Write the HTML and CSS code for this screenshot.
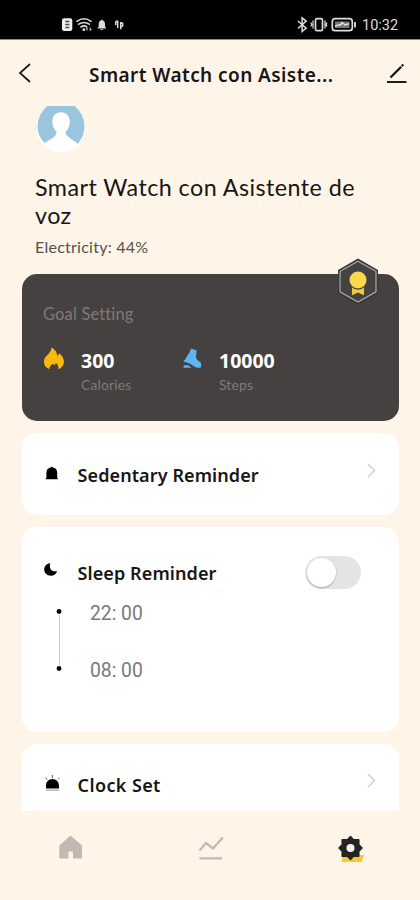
FILE: index.html
```
<!DOCTYPE html>
<html lang="en">
<head>
<meta charset="utf-8">
<title>Smart Watch</title>
<link rel="stylesheet" href="styles.css">
</head>
<body>
<div class="status">
  <svg class="status-left" width="66" height="18" viewBox="60 16 66 18">
    <rect x="62" y="18.2" width="10.3" height="12.8" rx="2.2" fill="#eee"/>
    <path d="M65.3 21.5h4M65.3 24.5h4M65.3 27.5h4" stroke="#444" stroke-width="1.3"/>
    <g fill="none" stroke="#ddd" stroke-width="1.6" stroke-linecap="round"><path d="M77 21.3q7-5 14 0M78.7 24.2q5.300-3.500 10.600 0M81 27q3-2 5.500-.3"/></g>
    <circle cx="83.800" cy="29.700" r="1.400" fill="#ddd"/>
    <path d="M87 27.500v3m0-3l-1.300 1.300M90.200 30.500v-3m0 3l1.300-1.300" stroke="#ddd" fill="none"/>
    <path d="M97.300 28.500l1.400-2v-2.500q.2-3.400 2.600-3.800.6-1.400 1.200 0 2.300.5 2.500 3.800v2.500l1.300 2z" fill="#ddd"/><path d="M100 29.200h3.600q-1.800 1.900-3.600 0" fill="#ddd"/>
    <path d="M117.700 28v-7.200M115.700 25.200v-3l2-1.600M120.700 22v7.300M120.700 22.600l2 .6v2.600l-2 1.200" fill="none" stroke="#ddd" stroke-width="1.500"/>
  </svg>
  <div class="status-right">
    <svg width="61" height="18" viewBox="297 16 61 18" fill="none" stroke="#ddd">
      <path d="M299 21l8.200 7.300-4.100 3.200V17.800l4.100 3.300-8.200 7.400" stroke-width="1.500"/>
      <rect x="316.500" y="18.700" width="7" height="12" rx="1.500" stroke-width="1.700"/><path d="M314 20.500v8M311.800 22.500l1 2-1 2M326 20.500v8M328 22.500l-1 2 1 2" stroke-width="1.200"/>
      <rect x="333.300" y="18.700" width="20" height="12" rx="3" stroke-width="1.700"/><rect x="336" y="21.500" width="14.500" height="6.500" fill="#777" stroke="none"/><path d="M336 26l6-1.500 1-2 3 2.500 4-1.200" stroke-width="1.500"/><path d="M356 22v5.500" stroke-width="1.800"/>
    </svg>
    <span class="time">10:32</span>
  </div>
</div>
<header class="header">
  <svg width="14" height="22" viewBox="18 62 14 22" fill="none" stroke="#191714" stroke-width="1.700"><path d="M30 64L20 73l10 9"/></svg>
  <h1 class="title">Smart Watch con Asiste...</h1>
  <svg width="22" height="22" viewBox="386 62 22 22" stroke="#111"><path d="M390.500 77.500l10.700-10.800M401.800 66l1.500-1.500" stroke-width="2.300"/><path d="M387 82h19.500" stroke-width="1.900"/></svg>
</header>
<main class="content">
  <svg class="avatar" width="50" height="48" viewBox="36 106 50 48">
    <circle cx="61" cy="128" r="24.300" fill="#fff"/>
    <path d="M47.500 106h27Q84.500 114 84.500 127q0 9-7 17H45.500q-8-8-8-17 0-13 10-21z" fill="#99c5de"/>
    <path d="M61 112.300c5.600 0 8.800 4 8.800 9.300 0 4.500-1.800 8.300-4.300 10.500.2 4.800 5.500 6.200 12.300 11.700q-7 8.500-16.800 8.500T44 143.800c7-5.500 12.500-6.600 12.600-11.700-2.500-2.200-4.300-6-4.300-10.500 0-5.300 3.200-9.300 8.700-9.300z" fill="#fff"/>
  </svg>
  <h2 class="name">Smart Watch con Asistente de<br>voz</h2>
  <p class="power">Electricity: 44%</p>
  <section class="goal">
    <svg class="medal" width="46" height="50" viewBox="0 0 46 50">
      <path d="M23 1.500l20 11.500v23.500L23 48 3 36.500V13z" fill="#393737"/>
      <path d="M23 4.200l18 10.100v20.500L23 45 5 34.800V14.300z" fill="#454242" stroke="#aaa" stroke-width="1.200"/>
      <path d="M17 30v8.300l6-2.700 6 2.700V30z" fill="#f5cb3e"/>
      <circle cx="23" cy="23" r="9.700" fill="#454242"/><circle cx="23" cy="23" r="8.500" fill="#fbd849"/>
    </svg>
    <h3 class="goal-title">Goal Setting</h3>
    <div class="goals">
      <div class="item">
        <svg width="22" height="24" viewBox="43 346 22 24"><path d="M49.500 369c-4-1-5.500-4.500-5.500-7.500 0-4 2.500-5.300 4.500-7.500q2.700-2.800 3.200-6.500c3.400 2.300 5.600 5 5.500 8.500q1.300-.8 2-2.800c3.300 2.700 5 5.600 4.700 9.300-.3 3-2.300 5.700-5.600 6.700q1-2.800-2.300-6.500-.6 2-1.700 2.300-1-.3-1-1.300c-3 1.300-3.800 3.200-3.800 5.300z" fill="#fbb80c"/></svg>
        <div><strong>300</strong><small class="cal">Calories</small></div>
      </div>
      <div class="item">
        <svg width="22" height="24" viewBox="181 346 22 24" fill="#59b6f3"><path d="M191 348.500l5.700 2-.8 6.400 1 2.700 4 3.200q.8 1.500 0 4.600-4.500 1.300-7.500-1.300l-3.700-2.600-6.400-1.900q2.700-2.700 3.800-5.500 3-3.400 3.900-7.600z"/><path d="M183.800 365.200h4.500l3.200 2.500h-8z"/></svg>
        <div><strong>10000</strong><small class="steps">Steps</small></div>
      </div>
    </div>
  </section>
  <section class="card sedentary">
    <svg width="18" height="18" viewBox="43 464 18 18"><path d="M45.400 479.200l1-1.500v-5q.3-4.700 4.400-5.200l1-.9 1 .9q4.200.6 4.400 5.200v5l1 1.500z"/></svg>
    <b class="t1">Sedentary Reminder</b>
    <svg class="chev" width="12" height="18" viewBox="0 0 12 18"><path d="M2 2l6.500 6.500L2 15"/></svg>
  </section>
  <section class="card sleep">
    <div class="sleep-head">
      <svg width="18" height="18" viewBox="43 560 18 18"><path d="M50.200 563c-4 .8-6 3.500-6 6.500 0 3.500 3 6.200 6.700 6.200 3 0 5.400-1.700 6.200-4.700-4.500 1.500-8.500-1.600-6.900-8z"/></svg>
      <b class="t2">Sleep Reminder</b>
      <span class="toggle"></span>
    </div>
    <div class="range">
      <svg width="8" height="66" viewBox="0 0 8 66"><path d="M4.500 8v50" stroke="#c9c9c9"/><circle cx="4" cy="4.500" r="2.400"/><circle cx="4" cy="61.500" r="2.400"/></svg>
      <div class="times"><span>22: 00</span><span>08: 00</span></div>
    </div>
  </section>
  <section class="card clock">
    <svg width="18" height="18" viewBox="43 774 18 18"><path d="M46 789.500v-3q.5-6.500 6.500-6.500 6 .5 6.500 6.500v3z"/><path d="M46 791.200h13.500" stroke="#bbb" stroke-width="1.500"/><path d="M52.300 776v3M45.500 779l2 1.300M59.500 779l-1.800 1.300" stroke="#666"/></svg>
    <b class="t3">Clock Set</b>
    <svg class="chev" width="12" height="18" viewBox="0 0 12 18"><path d="M2 2l6.500 6.500L2 15"/></svg>
  </section>
</main>
<nav class="tabs">
  <svg width="30" height="30" viewBox="56 832 30 30"><path d="M70.500 835.500L82 845.500v13h-9v-7h-4.500v7h-9.200v-13z" fill="#c3b9b2"/></svg>
  <svg width="30" height="30" viewBox="196 832 30 30" fill="none" stroke="#c3b9b2" stroke-width="2.300"><path d="M199.500 850.500l6.500-7.500 7 5.500 9.800-11M199.500 858.400h22.700"/></svg>
  <svg width="30" height="30" viewBox="336 832 30 30"><path d="M342.500 855h21.500l-2.200 7h-20z" fill="#fac832"/><path d="M350.500 836.500l3 3.200h5.300v5l3.200 3.300-3.200 3.300v5h-5.300l-3 3.200-3-3.200h-5.300v-5l-3.200-3.300 3.200-3.300v-5h5.300z" fill="#242424" stroke="#242424" stroke-width="1.500" stroke-linejoin="round"/><circle cx="350.500" cy="848" r="4" fill="#fff4e8"/></svg>
</nav>
</body>
</html>
```
FILE: styles.css
```
* { box-sizing: border-box; }
body { margin: 0; width: 420px; height: 900px; display: flex; flex-direction: column; overflow: hidden; background: #fff4e8; color: #171614; font-family: Lato, "Noto Sans", sans-serif; font-variant-ligatures: none; }
h1, h2, h3, p { margin: 0; font-weight: 400; white-space: nowrap; }
svg { display: block; flex: none; }
.status { flex: none; height: 40px; background: #000; border-bottom: 1px solid #8b8781; display: flex; justify-content: space-between; padding: 16px 22px 0 60px; }
.status-right { display: flex; gap: 5px; }
.time { color: #ddd; font: 14.5px/20px Roboto, sans-serif; width: 36px; white-space: nowrap; }
.header { flex: none; height: 66px; display: flex; align-items: flex-start; justify-content: space-between; padding: 22px 12px 0 18px; }
.title { width: 240px; font-family: "Noto Sans", sans-serif; font-size: 19px; line-height: 26px; font-weight: 600; letter-spacing: .43px; }
.content { flex: none; height: 705px; overflow: hidden; padding: 0 21px 0 22px; }
.avatar { margin-left: 14px; }
.name { margin: 19px 0 0 13px; font-size: 23.3px; line-height: 28px; font-weight: 400; letter-spacing: .45px; }
.power { margin: 7px 0 0 13px; font-size: 16px; line-height: 22px; color: #55504a; letter-spacing: .25px; }
.goal { position: relative; margin-top: 16px; height: 147px; border-radius: 15px; background: #454140; padding: 29px 0 0 21px; }
.medal { position: absolute; right: 18px; top: -17px; }
.goal-title { font-size: 16.5px; line-height: 22px; color: #7e7a78; letter-spacing: .15px; }
.goals { display: flex; margin-top: 21px; }
.item { width: 138px; display: flex; gap: 16px; }
.item strong { display: block; color: #fff; font-family: "Noto Sans", sans-serif; font-size: 19.5px; line-height: 30px; font-weight: 700; }
.item small { display: block; color: #7e7a78; font-size: 13.8px; line-height: 18px; letter-spacing: .2px; }
.card { background: #fff; border-radius: 15px; margin-top: 12px; display: flex; padding: 0 21px; }
.card b { font-family: "Noto Sans", sans-serif; font-size: 18px; line-height: 26px; font-weight: 600; white-space: nowrap; margin-left: 16.5px; letter-spacing: .1px; }
.card .t3 { letter-spacing: .4px; }
.card .chev { margin-left: auto; fill: none; stroke: #d2d2d2; stroke-width: 1.500; }
.sedentary { height: 82px; padding-top: 29px; }
.sedentary > svg:first-child { margin-top: 2px; }
.sleep { height: 205px; flex-direction: column; padding-top: 29px; }
.sleep-head { display: flex; height: 35px; }
.sleep-head > svg { margin-top: 4px; }
.sleep-head b { margin-top: 4px; }
.toggle { margin-left: auto; margin-right: 17px; width: 56px; height: 33px; border-radius: 17px; background: #e4e4e4; padding: 2px; }
.toggle::before { content: ""; display: block; width: 29px; height: 29px; border-radius: 50%; background: #fff; box-shadow: 0 1px 2px #aaa; }
.range { display: flex; gap: 27px; margin: 16px 0 0 12px; }
.times { display: flex; flex-direction: column; gap: 31px; margin-top: -6px; }
.times span { font-family: Roboto, sans-serif; font-size: 19.3px; line-height: 26px; color: #7a7a7a; white-space: nowrap; }
.clock { height: 82px; padding-top: 28px; }
.clock > svg:first-child { margin-top: 1px; }
.tabs { height: 89px; display: flex; justify-content: space-between; padding: 21px 54px 0 56px; }
```
